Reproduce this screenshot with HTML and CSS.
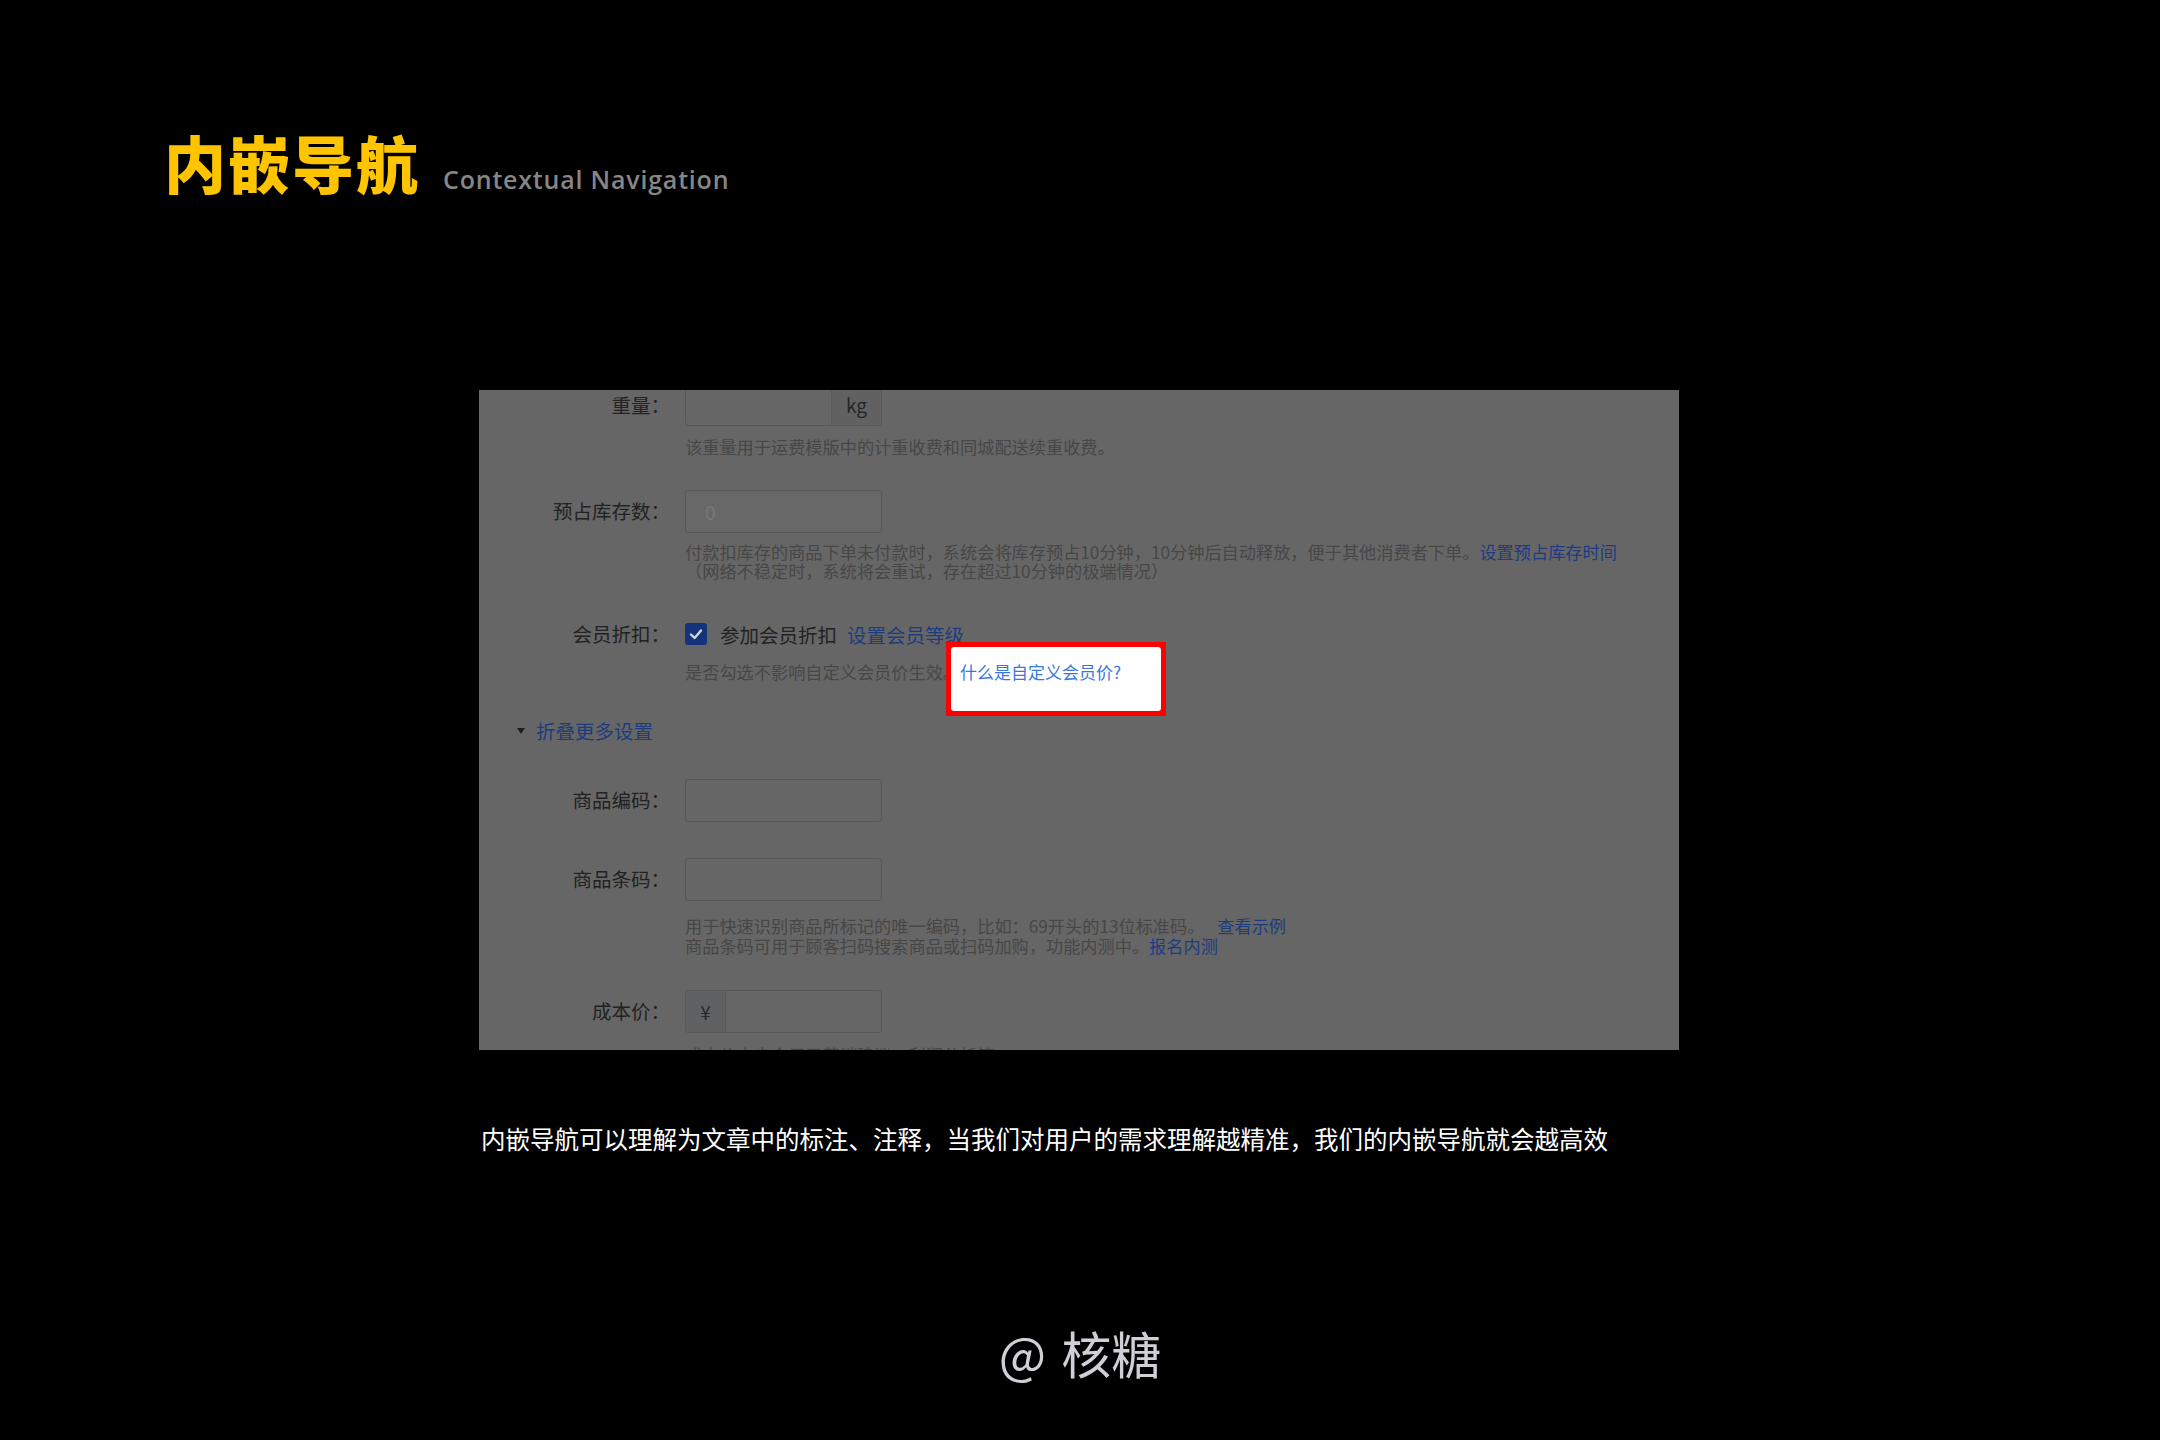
FILE: index.html
```html
<!DOCTYPE html>
<html lang="zh-CN">
<head>
<meta charset="utf-8">
<title>内嵌导航 Contextual Navigation</title>
<link rel="stylesheet" href="styles.css">
</head>
<body>
<div class="header">
  <div class="title">内嵌导航</div>
  <div class="subtitle">Contextual Navigation</div>
</div>

<div class="panel">
  <div class="form">
    <div class="field">
      <div class="label">重量：</div>
      <div class="input"><div class="input-body"></div><div class="addon addon-right">kg</div></div>
    </div>
    <div class="help mt-10">该重量用于运费模版中的计重收费和同城配送续重收费。</div>

    <div class="field mt-34">
      <div class="label">预占库存数：</div>
      <div class="input input-disabled"><div class="input-body"><span class="placeholder">0</span></div></div>
    </div>
    <div class="help mt-9">付款扣库存的商品下单未付款时，系统会将库存预占10分钟，10分钟后自动释放，便于其他消费者下单。<span class="link">设置预占库存时间</span><br>（网络不稳定时，系统将会重试，存在超过10分钟的极端情况）</div>

    <div class="field field-check mt-40">
      <div class="label">会员折扣：</div>
      <div class="checkbox"><svg viewBox="0 0 22 22" width="22" height="22"><path d="M6 11.5 L9.6 15 L16 7.5" fill="none" stroke="#d2d6de" stroke-width="2.4" stroke-linecap="round" stroke-linejoin="round"/></svg></div>
      <div class="check-text">参加会员折扣</div>
      <div class="link link-lg">设置会员等级</div>
    </div>
    <div class="help mt-13">是否勾选不影响自定义会员价生效。什么是自定义会员价?</div>

    <div class="toggle mt-36"><span class="caret"></span><span class="link link-lg">折叠更多设置</span></div>

    <div class="field mt-34">
      <div class="label">商品编码：</div>
      <div class="input"><div class="input-body"></div></div>
    </div>

    <div class="field mt-36">
      <div class="label">商品条码：</div>
      <div class="input"><div class="input-body"></div></div>
    </div>
    <div class="help help-20 mt-15">用于快速识别商品所标记的唯一编码，比如：69开头的13位标准码。 <span class="link link-gap">查看示例</span><br>商品条码可用于顾客扫码搜索商品或扫码加购，功能内测中。<span class="link">报名内测</span></div>

    <div class="field mt-34">
      <div class="label">成本价：</div>
      <div class="input"><div class="addon addon-left">¥</div><div class="input-body"></div></div>
    </div>
    <div class="help mt-12">成本价未来会用于营销建议，利润分析等</div>
  </div>

  <div class="spotlight">
    <div class="spotlight-inner">什么是自定义会员价?</div>
  </div>
</div>

<p class="caption">内嵌导航可以理解为文章中的标注、注释，当我们对用户的需求理解越精准，我们的内嵌导航就会越高效</p>

<div class="footer">@ 核糖</div>
</body>
</html>
```

FILE: styles.css
```css
html, body {
  margin: 0;
  padding: 0;
}

body {
  background: #000;
  width: 2160px;
  height: 1440px;
  overflow: hidden;
  font-family: "Noto Sans CJK SC", sans-serif;
}

.header {
  display: flex;
  align-items: baseline;
  padding: 131px 0 0 164px;
}

.title {
  font-family: "Noto Sans CJK SC", sans-serif;
  font-size: 62px;
  line-height: 62px;
  font-weight: 900;
  color: #ffc400;
  letter-spacing: 2px;
}

.subtitle {
  font-family: "Open Sans", sans-serif;
  font-weight: 600;
  font-size: 25px;
  color: #868686;
  margin-left: 23px;
  letter-spacing: 0.8px;
}

.panel {
  position: relative;
  margin: 194px 0 0 479px;
  width: 1200px;
  height: 660px;
  background: #666666;
  overflow: hidden;
}

.form {
  display: flex;
  flex-direction: column;
  margin-top: -7px;
}

.field {
  display: flex;
  align-items: center;
  height: 43px;
  flex: none;
}

.field-check {
  height: 28px;
}

.label {
  width: 191px;
  flex: none;
  text-align: right;
  font-size: 19.5px;
  line-height: 28px;
  color: #222;
}

.input {
  margin-left: 15px;
  width: 197px;
  height: 43px;
  box-sizing: border-box;
  border: 1px solid #585858;
  border-radius: 3px;
  display: flex;
  overflow: hidden;
}

.input-body {
  flex: 1;
  display: flex;
  align-items: center;
  padding-left: 19px;
}

.input-disabled {
  background: #686868;
}

.placeholder {
  font-size: 19px;
  color: #787878;
}

.addon {
  flex: none;
  display: flex;
  align-items: center;
  justify-content: center;
  font-size: 19px;
  color: #262626;
  background: #616161;
}

.addon-right {
  width: 49px;
  border-left: 1px solid #595959;
}

.addon-left {
  width: 39px;
  border-right: 1px solid #595959;
  background: #5f6163;
  color: #2a2a2a;
}

.checkbox {
  margin-left: 15px;
  width: 22px;
  height: 22px;
  border-radius: 3px;
  background: #13347a;
  flex: none;
  display: flex;
}

.check-text {
  margin-left: 13px;
  font-size: 19.5px;
  color: #222;
}

.link {
  color: #1d3c80;
}

.link-lg {
  font-size: 19.5px;
}

.link-gap {
  margin-left: 9px;
}

.check-text + .link {
  margin-left: 10px;
}

.help {
  margin-left: 206px;
  font-size: 17.2px;
  line-height: 19px;
  color: #474747;
  white-space: nowrap;
}

.help-20 {
  line-height: 20px;
}

.toggle {
  display: flex;
  align-items: center;
  height: 28px;
  padding-left: 38px;
}

.caret {
  width: 0;
  height: 0;
  border-left: 4px solid transparent;
  border-right: 4px solid transparent;
  border-top: 6px solid #1e1e1e;
  margin-right: 11px;
}

.mt-9 { margin-top: 9.5px; }
.mt-10 { margin-top: 10.5px; }
.mt-12 { margin-top: 12.5px; }
.mt-13 { margin-top: 13.5px; }
.mt-15 { margin-top: 15px; }
.mt-34 { margin-top: 34px; }
.mt-36 { margin-top: 36px; }
.mt-40 { margin-top: 40px; }

.spotlight {
  position: absolute;
  left: 467px;
  top: 252px;
  width: 220px;
  height: 74px;
  box-sizing: border-box;
  background: #ff0000;
  padding: 5px;
}

.spotlight-inner {
  height: 100%;
  box-sizing: border-box;
  background: #fff;
  border-radius: 3px;
  padding: 14px 0 0 9px;
  font-size: 17px;
  line-height: 22px;
  color: #3a78dc;
  white-space: nowrap;
}

.caption {
  margin: 72px 0 0 481px;
  font-size: 24.5px;
  line-height: 34px;
  color: #fff;
  white-space: nowrap;
}

.footer {
  margin-top: 166px;
  text-align: center;
  font-size: 50px;
  line-height: 60px;
  color: #cfcfd6;
  word-spacing: 4px;
}
```
